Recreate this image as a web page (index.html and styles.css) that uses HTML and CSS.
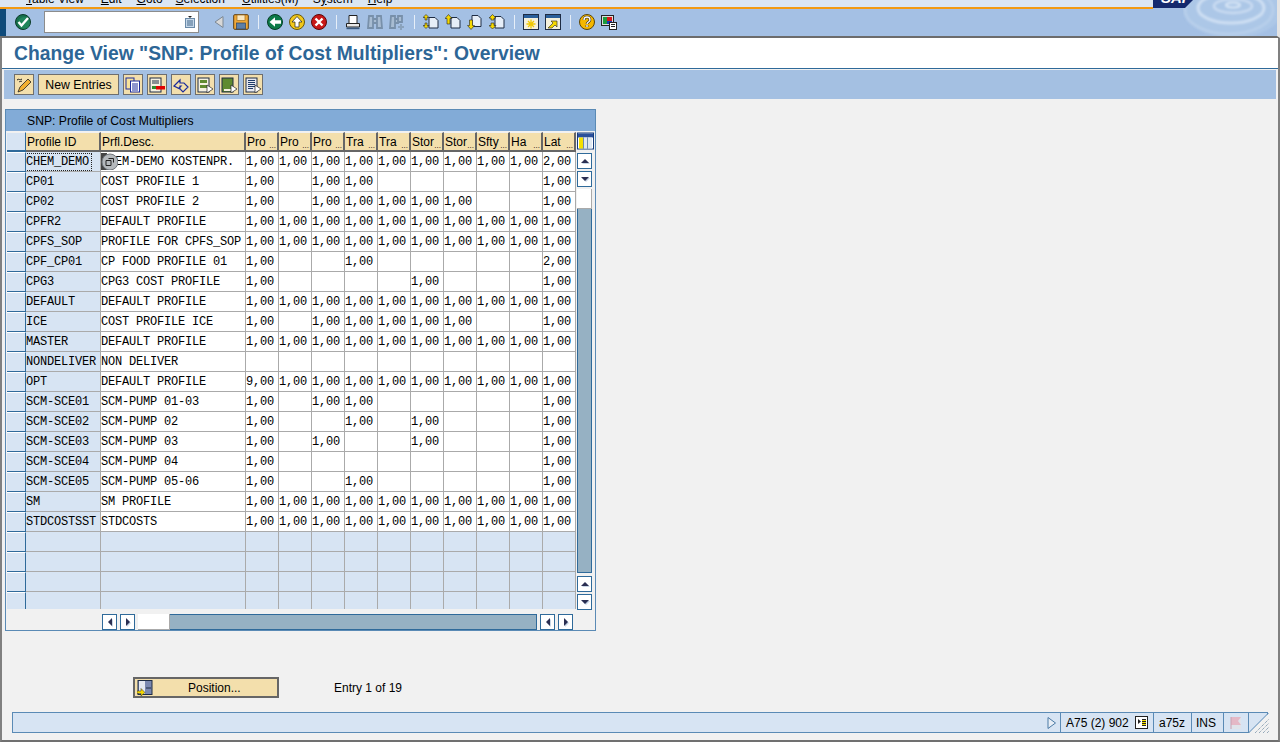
FILE: index.html
```html
<!DOCTYPE html>
<html lang="en">
<head>
  <meta charset="UTF-8">
  <title>Change View "SNP: Profile of Cost Multipliers": Overview</title>
  <link rel="stylesheet" href="styles.css">
</head>
<body>
<div class="window">

  <!-- top bars -->
  <div class="top">
    <div class="top-left">
      <div class="menubar">
        <span class="menu-item m1"><u>T</u>able View</span>
        <span class="menu-item m2"><u>E</u>dit</span>
        <span class="menu-item m3"><u>G</u>oto</span>
        <span class="menu-item m4"><u>S</u>election</span>
        <span class="menu-item m5"><u>U</u>tilities(M)</span>
        <span class="menu-item m6">S<u>y</u>stem</span>
        <span class="menu-item m7"><u>H</u>elp</span>
      </div>
      <div class="toolbar">
        <svg class="ico" viewBox="0 0 16 16"><circle cx="8" cy="8" r="7.5" fill="#16704c" stroke="#0b3a28"/><circle cx="9" cy="9" r="6" fill="#2a9a68" opacity=".5"/><path d="M3.500 8l3 3.500L13 4" fill="none" stroke="#fff" stroke-width="2.400"/></svg>
        <div class="cmd-field">
          <svg class="field-ico" viewBox="0 0 10 12"><path d="M3 0h4l-2 2z" fill="#222"/><rect x=".5" y="2.500" width="9" height="9" fill="#c6d8ea" stroke="#6a8aa8"/><path d="M2 5h6M2 7h6M2 9h6" stroke="#45688a"/></svg>
        </div>
        <svg class="ico back" viewBox="0 0 16 16"><path d="M12 2.500v11L4 8z" fill="#d8d8d8" stroke="#7c8894"/></svg>
        <svg class="ico" viewBox="0 0 16 16"><rect x=".7" y=".7" width="14.600" height="14.600" rx="1" fill="#f0a838" stroke="#5a3c10"/><rect x="4" y="1" width="8" height="5.500" fill="#fbe8c0" stroke="#a06c18" stroke-width=".7"/><rect x="3.500" y="9" width="9" height="6" fill="#5c7fa8" stroke="#2d4260" stroke-width=".7"/></svg>
        <span class="sep"></span>
        <svg class="ico" viewBox="0 0 16 16"><circle cx="8" cy="8" r="7.500" fill="#0c7a48" stroke="#063c24"/><path d="M2.500 8L8 3.200v3h6v3.600H8v3z" fill="#fff"/></svg>
        <svg class="ico gap6" viewBox="0 0 16 16"><circle cx="8" cy="8" r="7.500" fill="#f2c81c" stroke="#6a5808"/><path d="M8 2.500L13 8h-3v5H6V8H3z" fill="#fff" stroke="#222" stroke-width=".7"/></svg>
        <svg class="ico gap6" viewBox="0 0 16 16"><circle cx="8" cy="8" r="7.500" fill="#c81818" stroke="#5a0808"/><path d="M4.500 4.500l7 7M11.500 4.500l-7 7" stroke="#fff" stroke-width="2.400"/></svg>
        <span class="sep"></span>
        <svg class="ico" viewBox="0 0 16 16"><path d="M4 1.500h8v8H4z" fill="#fff" stroke="#222"/><path d="M1.500 9.500h13v3.500h-13z" fill="#e8e8e8" stroke="#222"/><path d="M1.500 14.500h13" stroke="#3a5a80" stroke-width="1.400"/></svg>
        <svg class="ico gap6" viewBox="0 0 16 16"><path d="M2 2h4v12H1zM10 2h4l1 12h-5zM6 5h4v4H6z" fill="#a8bcd2" stroke="#7890aa" stroke-width="1.800"/></svg>
        <svg class="ico gap6" viewBox="0 0 16 16"><path d="M2 2h4v12H1zM9 2h4v6H9zM6 5h3v4H6z" fill="#a8bcd2" stroke="#7890aa" stroke-width="1.800"/><path d="M9 13h6M12 10v6" stroke="#8aa2bc" stroke-width="2"/></svg>
        <span class="sep"></span>
        <svg class="ico" viewBox="0 0 16 16"><path d="M6 3.500h6l3 3v7.500H6z" fill="#e6eef8" stroke="#1e2c44"/><path d="M3 .5L6 3.500H4V6H2V3.500H0zM3 14.500L0 11.500H2V9H4V11.500H6z" fill="#f5d800" stroke="#222" stroke-width=".6"/></svg>
        <svg class="ico gap6" viewBox="0 0 16 16"><path d="M6 3.500h6l3 3v7.500H6z" fill="#e6eef8" stroke="#1e2c44"/><path d="M3.500 .5L7 4.500H5V10H2V4.500H0z" fill="#f5d800" stroke="#222" stroke-width=".6"/></svg>
        <svg class="ico gap6" viewBox="0 0 16 16"><path d="M5 1.500h6l3 3v8H5z" fill="#e6eef8" stroke="#1e2c44"/><path d="M4 15.500L.5 11.500H2.500V6h3v5.500h2z" fill="#f5d800" stroke="#222" stroke-width=".6"/></svg>
        <svg class="ico gap6" viewBox="0 0 16 16"><path d="M6 2.500h6l3 3v8.500H6z" fill="#e6eef8" stroke="#1e2c44"/><path d="M3.500 .5L7 4H5V6H2V4H0zM3.500 15L0 11.500H2V9H5v2.500H7z" fill="#f5d800" stroke="#222" stroke-width=".6"/></svg>
        <span class="sep"></span>
        <svg class="ico" viewBox="0 0 16 16"><rect x=".5" y=".5" width="15" height="15" fill="#f4f0dc" stroke="#1e2c44"/><rect x="1" y="1" width="14" height="3" fill="#2a5f9a"/><path d="M8 5.500v9M3.500 10h9M5 7l6 6M11 7l-6 6" stroke="#f0c800" stroke-width="1.300"/></svg>
        <svg class="ico gap6" viewBox="0 0 16 16"><rect x=".5" y=".5" width="15" height="15" fill="#f4f0dc" stroke="#1e2c44"/><rect x="1" y="1" width="14" height="3" fill="#2a5f9a"/><path d="M3 14l5-5-2-2h6v6l-2-2-3 3z" fill="#f5d800" stroke="#222" stroke-width=".6"/></svg>
        <span class="sep"></span>
        <svg class="ico" viewBox="0 0 16 16"><circle cx="8" cy="8" r="7.500" fill="#f5b800" stroke="#5a4408"/><path d="M5 6c0-4 6-4 6 0 0 2-3 2-3 4M8 11v2" fill="none" stroke="#222" stroke-width="2.600"/><path d="M5 6c0-4 6-4 6 0 0 2-3 2-3 4M8 11v2" fill="none" stroke="#fff" stroke-width="1.400"/></svg>
        <svg class="ico gap6" viewBox="0 0 16 16"><rect x=".5" y="1.500" width="12" height="10" fill="#ddd" stroke="#222"/><rect x="2" y="3" width="4" height="7" fill="#1c9c3c"/><rect x="6" y="3" width="5" height="4" fill="#d81818"/><rect x="6" y="7" width="5" height="3" fill="#1838b8"/><rect x="8.500" y="8.500" width="7" height="7" fill="#fff" stroke="#222"/><path d="M10 10.500h4M10 12.500h4" stroke="#222"/></svg>
      </div>
    </div>
    <svg class="brand" viewBox="0 0 124 36">
      <defs>
        <clipPath id="waveClip"><rect x="30" y="0" width="94" height="36"/></clipPath>
        <filter id="waveBlur"><feGaussianBlur stdDeviation=".8"/></filter>
      </defs>
      <g clip-path="url(#waveClip)">
        <ellipse cx="80" cy="8" rx="50" ry="30" fill="#b4cdea" opacity=".55" filter="url(#waveBlur)"/>
        <g fill="none" stroke="#d8e6f6" filter="url(#waveBlur)">
          <ellipse cx="80" cy="5" rx="7" ry="2.500" stroke-width="2"/>
          <ellipse cx="80" cy="6" rx="19" ry="7" stroke-width="2.500" opacity=".7"/>
          <ellipse cx="78" cy="8" rx="33" ry="15" stroke-width="3" opacity=".8"/>
          <ellipse cx="76" cy="10" rx="44" ry="24" stroke-width="2.500" opacity=".3"/>
        </g>
      </g>
      <path d="M0 0h40l-8 8H0z" fill="#14296e"/>
      <text class="brand-text" x="8" y="3">SAP</text>
    </svg>
  </div>

  <div class="title-bar"><h1>Change View "SNP: Profile of Cost Multipliers": Overview</h1></div>

  <div class="app-toolbar">
    <button class="app-btn"><svg viewBox="0 0 16 16"><path d="M2 15l2-5L12 2l3 3-8 8z" fill="#f2b030" stroke="#222" stroke-width=".8"/><path d="M1 3c2-2 3 1 5-1M3 5c1-1 2 0 3-1" fill="none" stroke="#222"/></svg></button>
    <button class="app-btn-text">New Entries</button>
    <button class="app-btn"><svg viewBox="0 0 16 16"><rect x="1" y="1" width="8" height="11" fill="#f7e29a" stroke="#1c2c9c"/><rect x="5.500" y="4" width="9" height="11" fill="#fff" stroke="#1c2c9c"/><path d="M7 7h6M7 9h6M7 11h6M7 13h6" stroke="#1c2c9c"/></svg></button>
    <button class="app-btn"><svg viewBox="0 0 16 16"><rect x="1" y="1" width="11" height="14" fill="#f4f0e0" stroke="#1e2c44"/><path d="M3 4h7M3 6h7" stroke="#1e2c44"/><path d="M3 9h4v3H3z" fill="#2f8a2f"/><rect x="7" y="9" width="9" height="3.500" fill="#e00000"/></svg></button>
    <button class="app-btn"><svg viewBox="0 0 16 16"><path d="M1 9l6-6v3h4l4 4-5 5-4-4 2-2H7v3z" fill="none" stroke="#1c2c9c" stroke-width="1.200"/></svg></button>
    <button class="app-btn"><svg viewBox="0 0 16 16"><rect x="1" y="1" width="11" height="14" fill="#f4f0e0" stroke="#1e2c44"/><path d="M3 3h7v3H3zM3 8h7v3H3z" fill="#5f8a2f"/><path d="M10 8l6 4-6 4z" fill="#fff" stroke="#222" stroke-width=".7"/></svg></button>
    <button class="app-btn"><svg viewBox="0 0 16 16"><rect x="1" y="1" width="11" height="14" fill="#5f8a2f" stroke="#1e2c44"/><rect x="3" y="12" width="7" height="2" fill="#f4f0e0"/><path d="M10 8l6 4-6 4z" fill="#fff" stroke="#222" stroke-width=".7"/></svg></button>
    <button class="app-btn"><svg viewBox="0 0 16 16"><rect x="1" y="1" width="11" height="14" fill="#e6e8f0" stroke="#1e2c44"/><path d="M3 3.500h7M3 5.500h7M3 7.500h7M3 9.500h7M3 11.500h5" stroke="#1e3c6a"/><path d="M10 8l6 4-6 4z" fill="#fff" stroke="#222" stroke-width=".7"/></svg></button>
  </div>

  <div class="panel">
    <div class="panel-title">SNP: Profile of Cost Multipliers</div>
    <div class="panel-body">
      <div class="grid-clip">
        <table class="grid">
          <colgroup>
            <col class="c-sel"><col class="c-id"><col class="c-desc">
            <col class="c-num"><col class="c-num"><col class="c-num"><col class="c-num"><col class="c-num">
            <col class="c-num"><col class="c-num"><col class="c-num"><col class="c-num"><col class="c-num">
          </colgroup>
          <thead>
            <tr>
              <th class="sel"></th><th>Profile ID</th><th>Prfl.Desc.</th>
              <th class="cut">Pro</th><th class="cut">Pro</th><th class="cut">Pro</th><th class="cut">Tra</th><th class="cut">Tra</th>
              <th class="cut">Stor</th><th class="cut">Stor</th><th class="cut">Sfty</th><th class="cut">Ha</th><th class="cut">Lat</th>
            </tr>
          </thead>
          <tbody>
            <tr><td class="sel"></td><td class="key"><span class="focus">CHEM_DEMO</span></td><td class="desc">CHEM-DEMO KOSTENPR.<span class="cursor"><svg viewBox="0 0 17 17"><path d="M0 0h6v17H0z" fill="#444"/><circle cx="9" cy="9" r="8" fill="#b4b8bc" stroke="#70767c"/><path d="M5 7.500h5v5H5zM7.500 5.500h5v4" fill="none" stroke="#222"/></svg></span></td><td>1,00</td><td>1,00</td><td>1,00</td><td>1,00</td><td>1,00</td><td>1,00</td><td>1,00</td><td>1,00</td><td>1,00</td><td>2,00</td></tr>
            <tr><td class="sel"></td><td class="key">CP01</td><td class="desc">COST PROFILE 1</td><td>1,00</td><td></td><td>1,00</td><td>1,00</td><td></td><td></td><td></td><td></td><td></td><td>1,00</td></tr>
            <tr><td class="sel"></td><td class="key">CP02</td><td class="desc">COST PROFILE 2</td><td>1,00</td><td></td><td>1,00</td><td>1,00</td><td>1,00</td><td>1,00</td><td>1,00</td><td></td><td></td><td>1,00</td></tr>
            <tr><td class="sel"></td><td class="key">CPFR2</td><td class="desc">DEFAULT PROFILE</td><td>1,00</td><td>1,00</td><td>1,00</td><td>1,00</td><td>1,00</td><td>1,00</td><td>1,00</td><td>1,00</td><td>1,00</td><td>1,00</td></tr>
            <tr><td class="sel"></td><td class="key">CPFS_SOP</td><td class="desc">PROFILE FOR CPFS_SOP</td><td>1,00</td><td>1,00</td><td>1,00</td><td>1,00</td><td>1,00</td><td>1,00</td><td>1,00</td><td>1,00</td><td>1,00</td><td>1,00</td></tr>
            <tr><td class="sel"></td><td class="key">CPF_CP01</td><td class="desc">CP FOOD PROFILE 01</td><td>1,00</td><td></td><td></td><td>1,00</td><td></td><td></td><td></td><td></td><td></td><td>2,00</td></tr>
            <tr><td class="sel"></td><td class="key">CPG3</td><td class="desc">CPG3 COST PROFILE</td><td>1,00</td><td></td><td></td><td></td><td></td><td>1,00</td><td></td><td></td><td></td><td>1,00</td></tr>
            <tr><td class="sel"></td><td class="key">DEFAULT</td><td class="desc">DEFAULT PROFILE</td><td>1,00</td><td>1,00</td><td>1,00</td><td>1,00</td><td>1,00</td><td>1,00</td><td>1,00</td><td>1,00</td><td>1,00</td><td>1,00</td></tr>
            <tr><td class="sel"></td><td class="key">ICE</td><td class="desc">COST PROFILE ICE</td><td>1,00</td><td></td><td>1,00</td><td>1,00</td><td>1,00</td><td>1,00</td><td>1,00</td><td></td><td></td><td>1,00</td></tr>
            <tr><td class="sel"></td><td class="key">MASTER</td><td class="desc">DEFAULT PROFILE</td><td>1,00</td><td>1,00</td><td>1,00</td><td>1,00</td><td>1,00</td><td>1,00</td><td>1,00</td><td>1,00</td><td>1,00</td><td>1,00</td></tr>
            <tr><td class="sel"></td><td class="key">NONDELIVER</td><td class="desc">NON DELIVER</td><td></td><td></td><td></td><td></td><td></td><td></td><td></td><td></td><td></td><td></td></tr>
            <tr><td class="sel"></td><td class="key">OPT</td><td class="desc">DEFAULT PROFILE</td><td>9,00</td><td>1,00</td><td>1,00</td><td>1,00</td><td>1,00</td><td>1,00</td><td>1,00</td><td>1,00</td><td>1,00</td><td>1,00</td></tr>
            <tr><td class="sel"></td><td class="key">SCM-SCE01</td><td class="desc">SCM-PUMP 01-03</td><td>1,00</td><td></td><td>1,00</td><td>1,00</td><td></td><td></td><td></td><td></td><td></td><td>1,00</td></tr>
            <tr><td class="sel"></td><td class="key">SCM-SCE02</td><td class="desc">SCM-PUMP 02</td><td>1,00</td><td></td><td></td><td>1,00</td><td></td><td>1,00</td><td></td><td></td><td></td><td>1,00</td></tr>
            <tr><td class="sel"></td><td class="key">SCM-SCE03</td><td class="desc">SCM-PUMP 03</td><td>1,00</td><td></td><td>1,00</td><td></td><td></td><td>1,00</td><td></td><td></td><td></td><td>1,00</td></tr>
            <tr><td class="sel"></td><td class="key">SCM-SCE04</td><td class="desc">SCM-PUMP 04</td><td>1,00</td><td></td><td></td><td></td><td></td><td></td><td></td><td></td><td></td><td>1,00</td></tr>
            <tr><td class="sel"></td><td class="key">SCM-SCE05</td><td class="desc">SCM-PUMP 05-06</td><td>1,00</td><td></td><td></td><td>1,00</td><td></td><td></td><td></td><td></td><td></td><td>1,00</td></tr>
            <tr><td class="sel"></td><td class="key">SM</td><td class="desc">SM PROFILE</td><td>1,00</td><td>1,00</td><td>1,00</td><td>1,00</td><td>1,00</td><td>1,00</td><td>1,00</td><td>1,00</td><td>1,00</td><td>1,00</td></tr>
            <tr><td class="sel"></td><td class="key">STDCOSTSST</td><td class="desc">STDCOSTS</td><td>1,00</td><td>1,00</td><td>1,00</td><td>1,00</td><td>1,00</td><td>1,00</td><td>1,00</td><td>1,00</td><td>1,00</td><td>1,00</td></tr>
            <tr class="blank"><td class="sel"></td><td></td><td></td><td></td><td></td><td></td><td></td><td></td><td></td><td></td><td></td><td></td><td></td></tr>
            <tr class="blank"><td class="sel"></td><td></td><td></td><td></td><td></td><td></td><td></td><td></td><td></td><td></td><td></td><td></td><td></td></tr>
            <tr class="blank"><td class="sel"></td><td></td><td></td><td></td><td></td><td></td><td></td><td></td><td></td><td></td><td></td><td></td><td></td></tr>
            <tr class="blank"><td class="sel"></td><td></td><td></td><td></td><td></td><td></td><td></td><td></td><td></td><td></td><td></td><td></td><td></td></tr>
          </tbody>
        </table>
      </div>
      <div class="vscroll">
        <div class="config"><svg viewBox="0 0 17 17"><rect x=".5" y=".5" width="16" height="16" fill="#fff" stroke="#143c7c"/><rect x="1" y="1" width="15" height="4" fill="#2a4f9a"/><rect x="2" y="5" width="4" height="11" fill="#f5e000"/><rect x="7" y="5" width="3" height="11" fill="#dfe8f2"/><rect x="11" y="5" width="4" height="11" fill="#dfe8f2"/><path d="M6.500 5v11M10.500 5v11" stroke="#6f8db0"/></svg></div>
        <button class="sb-btn"><i class="tri up"></i></button>
        <button class="sb-btn"><i class="tri down"></i></button>
        <div class="v-track"><div class="v-thumb"></div></div>
        <button class="sb-btn"><i class="tri up"></i></button>
        <button class="sb-btn"><i class="tri down"></i></button>
      </div>
    </div>
    <div class="hscroll">
      <button class="sb-btn"><i class="tri left"></i></button>
      <button class="sb-btn"><i class="tri right"></i></button>
      <div class="h-track"><div class="h-thumb"></div></div>
      <button class="sb-btn"><i class="tri left"></i></button>
      <button class="sb-btn"><i class="tri right"></i></button>
    </div>
  </div>

  <div class="position-row">
    <button class="position-btn">
      <svg viewBox="0 0 16 16"><rect x="1" y=".5" width="14" height="14" fill="#7a88b0" stroke="#1e2c44"/><rect x="2" y="1" width="6" height="13" fill="#e4e8f0"/><path d="M9 8h5" stroke="#1e2c44"/><path d="M0 11h4V8.500l4 4-4 3.500v-2.500H0z" fill="#f5d800" stroke="#222" stroke-width=".5"/></svg>
      <span>Position...</span>
    </button>
    <span class="entry-info">Entry 1 of 19</span>
  </div>

  <div class="statusbar">
    <svg class="status-arrow" viewBox="0 0 9 12"><path d="M1 .5v11L8.500 6z" fill="#e8eef6" stroke="#4a7aa4"/></svg>
    <div class="status-cell s-sys">A75 (2) 902
      <svg class="status-ico" viewBox="0 0 13 13"><rect x=".5" y=".5" width="12" height="12" fill="#fff" stroke="#222"/><path d="M3 3l3 2.500L3 8z" fill="#222"/><rect x="7" y="3" width="4" height="7" fill="#f5e000"/><path d="M7 3.500h4M7 5.500h4M7 7.500h4M7 9.500h4" stroke="#222"/></svg>
    </div>
    <div class="status-cell s-host">a75z</div>
    <div class="status-cell s-ins">INS</div>
    <div class="status-cell s-flag"><svg viewBox="0 0 12 14"><rect x="1" y="1" width="10" height="12" fill="#dfe3ea"/><path d="M1 1h10l-3 4 3 4H1z" fill="#e4b8c6"/><path d="M1 1v12" stroke="#c8a0b0"/></svg></div>
    <div class="status-grip"><svg viewBox="0 0 20 21"><path d="M0 21L20 1V21z" fill="#f1f1f1"/><path d="M0 20.500L19.500 1" stroke="#5a8ab5"/><path d="M6 21L20 7M10 21L20 11M14 21l6-6M18 21l2-2" stroke="#6f8aa2" stroke-dasharray="1 1"/></svg></div>
  </div>
</div>
</body>
</html>
```

FILE: styles.css
```css
* {
  box-sizing: border-box;
}
html, body {
  margin: 0;
  height: 100%;
  overflow: hidden;
}
body {
  background: #f1f1f1;
  font-family: "Liberation Sans", Arial, sans-serif;
  font-size: 12px;
  color: #000;
}
button {
  font: inherit;
  color: inherit;
  padding: 0;
  margin: 0;
}
.window {
  height: 742px;
  border-left: 2px solid #808080;
  border-right: 2px solid #808080;
  border-bottom: 2px solid #707070;
  display: flex;
  flex-direction: column;
}

/* top bars */
.top {
  display: flex;
  height: 38px;
  margin: 0 -2px;
  background: #a4c0e4;
  border-bottom: 2px solid #6c6c6c;
  border-right: 3px solid #e4e4e4;
  flex: none;
}
.top-left {
  flex: 1;
  min-width: 0;
  border-left: 6px solid #0f4a7a;
}
.menubar {
  height: 9px;
  background: #dbe6f3;
  border-bottom: 2px solid #f39a12;
  margin-left: -6px;
  overflow: hidden;
  display: flex;
  font-size: 12px;
  line-height: 12px;
  padding-left: 26px;
}
.menu-item {
  margin-top: -7px;
  height: 12px;
  white-space: nowrap;
}
.m2 { margin-left: 17px; }
.m3 { margin-left: 15px; }
.m4 { margin-left: 13px; }
.m5 { margin-left: 17px; }
.m6 { margin-left: 14px; }
.m7 { margin-left: 15px; }
.toolbar {
  height: 28px;
  display: flex;
  align-items: center;
  padding-left: 9px;
  padding-bottom: 2px;
}
.ico {
  width: 16px;
  height: 16px;
  flex: none;
}
.gap6 {
  margin-left: 6px;
}
.back {
  margin-left: 12px;
  margin-right: 6px;
}
.sep {
  width: 1px;
  height: 14px;
  background: #e6eef8;
  margin: 0 8px 0 9px;
  flex: none;
}
.cmd-field {
  width: 155px;
  height: 22px;
  margin-left: 13px;
  background: #fff;
  border: 1px solid #8c8c8c;
  display: flex;
  align-items: center;
  justify-content: flex-end;
  padding-right: 3px;
}
.field-ico {
  width: 10px;
  height: 12px;
}
.brand {
  width: 124px;
  height: 36px;
  flex: none;
}
.brand-text {
  font-family: "Liberation Sans", Arial, sans-serif;
  font-size: 15px;
  font-weight: bold;
  font-style: italic;
  fill: #fff;
}

.title-bar {
  height: 31px;
  background: #fff;
  border-bottom: 1px solid #2f6a9a;
  padding-left: 12px;
  flex: none;
}
.title-bar h1 {
  margin: 0;
  font-size: 19.3px;
  line-height: 31px;
  font-weight: bold;
  color: #2d6696;
  white-space: nowrap;
}

.app-toolbar {
  height: 29px;
  margin: 1px 2px 0;
  background: #a4c0e2;
  padding-left: 10px;
  display: flex;
  align-items: center;
  gap: 4px;
  flex: none;
}
.app-btn, .app-btn-text {
  height: 21px;
  background: #f3dfac;
  border: 1px solid #6e6e6e;
  display: flex;
  align-items: center;
  justify-content: center;
}
.app-btn {
  width: 20px;
}
.app-btn svg {
  width: 16px;
  height: 16px;
}
.app-btn-text {
  width: 81px;
  font-size: 12.3px;
}

/* table panel */
.panel {
  width: 591px;
  height: 522px;
  margin: 10px 0 0 3px;
  border: 1px solid #5a8ab5;
  background: #f1f1f1;
  flex: none;
}
.panel-title {
  height: 21px;
  background: #82abd7;
  font-size: 12.2px;
  line-height: 22px;
  padding-left: 21px;
}
.panel-body {
  display: flex;
  padding-left: 1px;
  margin-top: 1px;
}
.grid-clip {
  width: 569px;
  height: 477px;
  overflow: hidden;
  flex: none;
}
.grid {
  table-layout: fixed;
  border-collapse: separate;
  border-spacing: 0;
  width: 569px;
  font-family: "Liberation Mono", monospace;
  font-size: 12px;
  letter-spacing: -.2px;
}
.c-sel { width: 19px; }
.c-id { width: 75px; }
.c-desc { width: 145px; }
.c-num { width: 33px; }
.grid th {
  position: relative;
  height: 20px;
  background: #f3dfac;
  border-top: 1px solid #f1f1f1;
  border-right: 2px solid #666;
  border-bottom: 2px solid #666;
  font-family: "Liberation Sans", Arial, sans-serif;
  font-size: 12px;
  font-weight: normal;
  letter-spacing: 0;
  text-align: left;
  padding: 0 1px;
  overflow: hidden;
  white-space: nowrap;
}
.grid th.cut::after {
  content: "...";
  position: absolute;
  right: 1px;
  bottom: 0;
  font-size: 8px;
  line-height: 8px;
}
.grid th.sel {
  background: #d7e4f3;
  border-right: 1px solid #2f6a9a;
  border-bottom: 2px solid #2f6a9a;
}
.grid td {
  height: 20px;
  padding: 0;
  background: #fff;
  border-right: 1px solid #aaa;
  border-bottom: 1px solid #aaa;
  white-space: nowrap;
  overflow: hidden;
}
.grid td.sel {
  background: #d7e4f3;
  border-right: 1px solid #2f6a9a;
  border-bottom: 1px solid #2f6a9a;
  border-top: 1px solid #fff;
}
.grid td.key {
  background: #d7e4f3;
}
.grid .blank td {
  background: #d7e4f3;
}
.focus {
  outline: 1px dotted #222;
  display: inline-block;
  line-height: 16px;
  width: 65px;
}
.desc {
  position: relative;
}
.cursor {
  position: absolute;
  left: 0;
  top: 1px;
  width: 17px;
  height: 17px;
}
.cursor svg {
  display: block;
  width: 17px;
  height: 17px;
}

/* scrollbars */
.vscroll {
  width: 18px;
  margin-left: 1px;
  display: flex;
  flex-direction: column;
  align-items: flex-start;
}
.config {
  width: 18px;
  height: 19px;
  margin-bottom: 2px;
}
.config svg {
  display: block;
  width: 17px;
  height: 18px;
}
.sb-btn {
  width: 15px;
  height: 16px;
  background: #fff;
  border: 1px solid #2f6a9a;
  display: flex;
  align-items: center;
  justify-content: center;
  flex: none;
}
.vscroll .sb-btn {
  margin-bottom: 2px;
}
.tri {
  display: block;
  width: 0;
  height: 0;
  border: 4px solid transparent;
  filter: drop-shadow(1px 1px 0 #c8d6e6);
}
.tri.up { border-bottom-color: #2b2f52; border-top-width: 0; }
.tri.down { border-top-color: #2b2f52; border-bottom-width: 0; }
.tri.left { border-right-color: #2b2f52; border-left-width: 0; }
.tri.right { border-left-color: #2b2f52; border-right-width: 0; }
.v-track {
  width: 15px;
  height: 384px;
  background: #96b1c3;
  border: 1px solid #2f6a9a;
  border-top: none;
  margin-bottom: 3px;
  flex: none;
}
.v-thumb {
  height: 20px;
  margin: 0 -1px;
  background: #fff;
  border-right: 1px solid #aaa;
  border-bottom: 1px solid #aaa;
}
.hscroll {
  display: flex;
  align-items: center;
  gap: 3px;
  height: 16px;
  margin-top: 2px;
  padding-left: 96px;
}
.h-track {
  width: 399px;
  height: 16px;
  background: #96b1c3;
  border: 1px solid #2f6a9a;
  border-left: none;
  flex: none;
}
.h-thumb {
  width: 32px;
  height: 16px;
  margin-top: -1px;
  background: #fff;
  border-right: 1px solid #aaa;
  border-bottom: 1px solid #aaa;
}

/* bottom */
.position-row {
  display: flex;
  align-items: center;
  height: 21px;
  margin: 46px 0 0 131px;
  flex: none;
}
.position-btn {
  width: 146px;
  height: 21px;
  background: #f3dfac;
  border: 2px solid #666;
  display: flex;
  align-items: center;
  padding-left: 2px;
}
.position-btn svg {
  width: 16px;
  height: 16px;
  flex: none;
}
.position-btn span {
  margin-left: 35px;
}
.entry-info {
  margin-left: 55px;
}
.statusbar {
  height: 21px;
  margin: 14px 10px 0 10px;
  background: #d7e4f3;
  border: 1px solid #5a8ab5;
  display: flex;
  align-items: center;
  justify-content: flex-end;
  flex: none;
}
.status-arrow {
  width: 9px;
  height: 12px;
  margin-right: 4px;
}
.status-cell {
  height: 19px;
  border-left: 1px solid #5a8ab5;
  padding-left: 5px;
  display: flex;
  align-items: center;
  white-space: nowrap;
  flex: none;
}
.s-sys { width: 93px; gap: 6px; }
.s-host { width: 38px; }
.s-ins { width: 32px; padding-left: 4px; }
.s-flag { width: 25px; padding-left: 6px; }
.s-flag svg {
  width: 12px;
  height: 14px;
}
.status-ico {
  width: 13px;
  height: 13px;
}
.status-grip {
  width: 20px;
  height: 21px;
  margin: -1px -1px -1px 0;
  border-left: 1px solid #5a8ab5;
  flex: none;
}
.status-grip svg {
  display: block;
  width: 20px;
  height: 21px;
}
```
